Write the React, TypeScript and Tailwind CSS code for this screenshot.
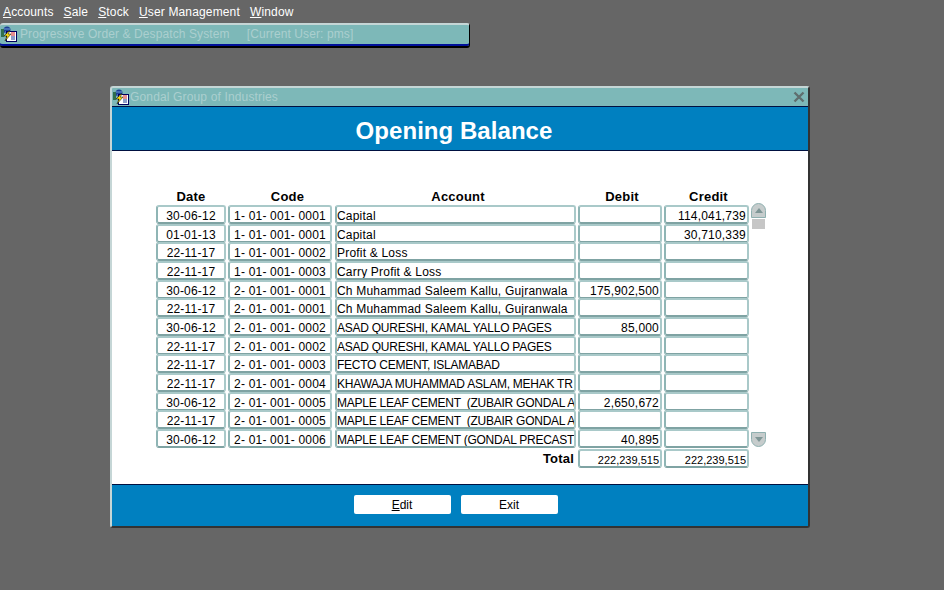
const rows = [
  ["30-06-12", "1- 01- 001- 0001", "Capital", "", "114,041,739"],
  ["01-01-13", "1- 01- 001- 0001", "Capital", "", "30,710,339"],
  ["22-11-17", "1- 01- 001- 0002", "Profit & Loss", "", ""],
  ["22-11-17", "1- 01- 001- 0003", "Carry Profit & Loss", "", ""],
  ["30-06-12", "2- 01- 001- 0001", "Ch Muhammad Saleem Kallu, Gujranwala", "175,902,500", ""],
  ["22-11-17", "2- 01- 001- 0001", "Ch Muhammad Saleem Kallu, Gujranwala", "", ""],
  ["30-06-12", "2- 01- 001- 0002", "ASAD QURESHI, KAMAL YALLO PAGES", "85,000", ""],
  ["22-11-17", "2- 01- 001- 0002", "ASAD QURESHI, KAMAL YALLO PAGES", "", ""],
  ["22-11-17", "2- 01- 001- 0003", "FECTO CEMENT, ISLAMABAD", "", ""],
  ["22-11-17", "2- 01- 001- 0004", "KHAWAJA MUHAMMAD ASLAM, MEHAK TR", "", ""],
  ["30-06-12", "2- 01- 001- 0005", "MAPLE LEAF CEMENT  (ZUBAIR GONDAL A", "2,650,672", ""],
  ["22-11-17", "2- 01- 001- 0005", "MAPLE LEAF CEMENT  (ZUBAIR GONDAL A", "", ""],
  ["30-06-12", "2- 01- 001- 0006", "MAPLE LEAF CEMENT (GONDAL PRECAST", "40,895", ""],
];

const fieldBox =
  "h-[19px] bg-white rounded-[3px] border-2 border-t-[#a9c9c9] border-l-[#8fb5b5] border-r-[#a9c9c9] border-b-[#7fa3a3] overflow-hidden whitespace-pre text-black leading-[18px]";

function FormsIcon() {
  return (
    <svg width="16" height="16" viewBox="0 0 16 16" className="shrink-0">
      <circle cx="6" cy="4" r="3.5" fill="#1c3f94" />
      <path d="M3 3h6M4 6h4" stroke="#6fa0d8" strokeWidth="1" />
      <rect x="0" y="3" width="3" height="8" fill="#2f6f4f" />
      <rect x="5" y="5" width="11" height="11" fill="#000060" />
      <rect x="6" y="6" width="9" height="9" fill="#ffffff" />
      <path d="M10 7h4M10 9h4" stroke="#d02020" strokeWidth="1" />
      <path d="M10 11h4M10 13h4" stroke="#1c3f94" strokeWidth="1" />
      <path d="M8 5 3 10h3l-2 5 6-7H7l2-3z" fill="#f4d80e" stroke="#000" strokeWidth="0.5" />
    </svg>
  );
}

function ScrollUp() {
  return (
    <div className="w-[15px] h-[15px] rounded-t-full bg-[#c6cccc] border border-[#8fb0b0] flex items-center justify-center">
      <div className="w-0 h-0 border-x-[4px] border-x-transparent border-b-[5px] border-b-[#7f9696]" />
    </div>
  );
}

function ScrollDown() {
  return (
    <div className="w-[15px] h-[15px] rounded-b-full bg-[#c6cccc] border border-[#8fb0b0] flex items-center justify-center">
      <div className="w-0 h-0 border-x-[4px] border-x-transparent border-t-[5px] border-t-[#7f9696]" />
    </div>
  );
}

export default function App() {
  return (
    <div
      className="w-[944px] h-[590px] bg-[#666666] overflow-hidden flex flex-col"
      style={{ fontFamily: '"Liberation Sans", Arial, sans-serif' }}
    >
      {/* menu bar */}
      <div className="h-[23px] pl-[3px] flex items-center gap-[10px] text-white text-[12px] tracking-[0.15px]">
        <span><u>A</u>ccounts</span>
        <span><u>S</u>ale</span>
        <span><u>S</u>tock</span>
        <span><u>U</u>ser Management</span>
        <span><u>W</u>indow</span>
      </div>

      {/* minimized main window */}
      <div className="w-[470px] h-[25px] bg-[#7db8b8] rounded-[3px] border-t-2 border-t-[#c5d6d6] border-r border-r-black border-b-2 border-b-black flex items-start pt-[1px] pl-[1px] shadow-[inset_0_-2px_0_#00109a]">
        <FormsIcon />
        <span className="ml-[3px] text-[#abcfcf] text-[12px] leading-[16px] tracking-[0.1px] whitespace-pre">
          Progressive Order &amp; Despatch System{"     "}[Current User: pms]
        </span>
      </div>

      {/* form window */}
      <div className="mt-[38px] ml-[110px] w-[700px] h-[442px] bg-[#7db8b8] rounded-[3px] border-t-2 border-t-[#c5d6d6] border-l-2 border-l-[#c5d6d6] border-r-2 border-r-[#333333] border-b-2 border-b-[#333333] flex flex-col">
        <div className="h-[18px] flex items-center pl-[1px] pr-[3px]">
          <FormsIcon />
          <span className="ml-[1px] text-[#abcfcf] text-[12px] tracking-[0.15px]">Gondal Group of Industries</span>
          <svg width="12" height="12" viewBox="0 0 12 12" className="ml-auto">
            <path d="M1.5 1.5 10.5 10.5M10.5 1.5 1.5 10.5" stroke="#5f6f6f" strokeWidth="2.4" />
          </svg>
        </div>

        <div className="h-[45px] bg-[#0080c0] border-y border-y-[#001040] flex items-center justify-center pt-[4px]">
          <h1 className="text-white text-[24px] font-bold tracking-[0.05px] pr-[12px]">Opening Balance</h1>
        </div>

        <div className="h-[333px] bg-white flex flex-col pt-[38px] pl-[44px]">
          <div className="flex gap-[2px] h-[15px] items-center text-black text-[13px] font-bold tracking-[0.2px] text-center">
            <div className="w-[70px]">Date</div>
            <div className="w-[104px] pl-[15px]">Code</div>
            <div className="w-[241px] ml-[1px] pl-[5px]">Account</div>
            <div className="w-[84px] pl-[4px]">Debit</div>
            <div className="w-[85px] pl-[4px]">Credit</div>
          </div>

          <div className="flex mt-[1px]">
            <div className="flex flex-col text-[12px] tracking-[0.2px]">
              {rows.map((r, i) => (
                <div key={i} className="flex gap-[2px] h-[18.67px]">
                  <div className={`${fieldBox} w-[70px] text-center`}>{r[0]}</div>
                  <div className={`${fieldBox} w-[104px] text-center`}>{r[1]}</div>
                  <div
                    className={`${fieldBox} w-[241px] ml-[1px]`}
                    style={{ letterSpacing: r[2] === r[2].toUpperCase() ? "-0.25px" : undefined }}
                  >
                    {r[2]}
                  </div>
                  <div className={`${fieldBox} w-[84px] text-right pr-[1px]`}>{r[3]}</div>
                  <div className={`${fieldBox} w-[85px] text-right pr-[1px]`}>{r[4]}</div>
                </div>
              ))}
            </div>
            <div className="ml-[2px] -mt-[2px] flex flex-col">
              <ScrollUp />
              <div className="mt-[1px] w-[13px] ml-[1px] h-[10px] bg-[#c6c6c6]" />
              <div className="mt-[203px]">
                <ScrollDown />
              </div>
            </div>
          </div>

          <div className="flex items-center justify-end w-[593px] gap-[2px] mt-[1px] text-[11px]">
            <span className="text-black text-[13px] font-bold tracking-[0.2px] mr-[2px]">Total</span>
            <div className={`${fieldBox} w-[84px] text-right pr-[1px]`}>222,239,515</div>
            <div className={`${fieldBox} w-[85px] text-right pr-[1px]`}>222,239,515</div>
          </div>
        </div>

        <div className="h-[42px] bg-[#0080c0] border-t border-t-[#001040] flex items-start justify-center gap-[10px] pt-[10px] pr-[9px]">
          <button className="w-[97px] h-[19px] bg-white rounded-[2px] text-black text-[12px] leading-[20px]">
            <u>E</u>dit
          </button>
          <button className="w-[97px] h-[19px] bg-white rounded-[2px] text-black text-[12px] leading-[18px]">Exit</button>
        </div>
      </div>
    </div>
  );
}
